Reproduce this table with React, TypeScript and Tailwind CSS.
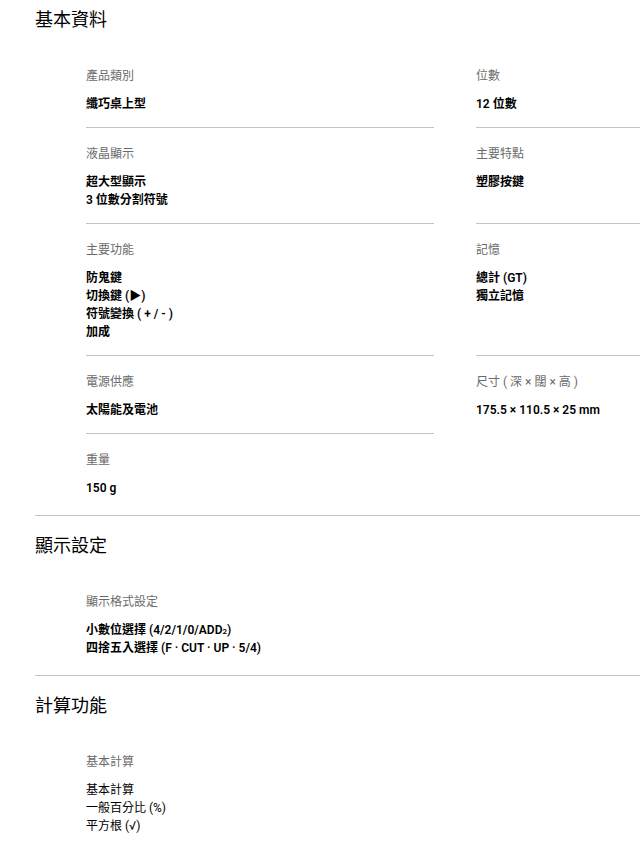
type Spec = {
  label: string;
  values: React.ReactNode[];
};

type Section = {
  title: string;
  items: Spec[];
  plain?: boolean;
};

const sections: Section[] = [
  {
    title: "基本資料",
    items: [
      { label: "產品類別", values: ["纖巧桌上型"] },
      { label: "位數", values: ["12 位數"] },
      { label: "液晶顯示", values: ["超大型顯示", "3 位數分割符號"] },
      { label: "主要特點", values: ["塑膠按鍵"] },
      {
        label: "主要功能",
        values: ["防鬼鍵", "切換鍵 (▶)", "符號變換 ( + / - )", "加成"],
      },
      { label: "記憶", values: ["總計 (GT)", "獨立記憶"] },
      { label: "電源供應", values: ["太陽能及電池"] },
      { label: "尺寸 ( 深 × 闊 × 高 )", values: ["175.5 × 110.5 × 25 mm"] },
      { label: "重量", values: ["150 g"] },
    ],
  },
  {
    title: "顯示設定",
    items: [
      {
        label: "顯示格式設定",
        values: [
          <>
            小數位選擇 (4/2/1/0/ADD
            <span className="text-[8px] leading-[0]">2</span>)
          </>,
          "四捨五入選擇 (F · CUT · UP · 5/4)",
        ],
      },
    ],
  },
  {
    title: "計算功能",
    plain: true,
    items: [
      {
        label: "基本計算",
        values: ["基本計算", "一般百分比 (%)", "平方根 (√)"],
      },
    ],
  },
];

const SpecItem = ({
  spec,
  index,
  plain,
}: {
  spec: Spec;
  index: number;
  plain?: boolean;
}) => (
  <div
    className={
      "pt-[17px] pb-[14px] " + (index >= 2 ? "border-t border-[#c4c4c4]" : "")
    }
  >
    <p className="text-[12px] leading-[18px] text-[#6b6b6b]">{spec.label}</p>
    <div
      className={
        "mt-[10px] text-[12px] leading-[18px] text-black " +
        (plain ? "font-normal" : "font-semibold")
      }
    >
      {spec.values.map((v, i) => (
        <p key={i}>{v}</p>
      ))}
    </div>
  </div>
);

export default function App() {
  return (
    <div
      className="w-[640px] overflow-hidden bg-white"
      style={{ fontFamily: "Roboto, 'Noto Sans CJK TC', sans-serif" }}
    >
      <div className="w-[900px] pl-[35px]">
        {sections.map((section, si) => (
          <section
            key={section.title}
            className={
              (si === 0 ? "pt-[8px]" : "pt-[18px] border-t border-[#c4c4c4]") +
              " pb-[4px]"
            }
          >
            <h2 className="text-[18px] leading-[24px] text-black">
              {section.title}
            </h2>
            <div className="mt-[18px] pl-[51px] grid grid-cols-[348px_348px] gap-x-[42px]">
              {section.items.map((spec, i) => (
                <SpecItem
                  key={spec.label + i}
                  spec={spec}
                  index={i}
                  plain={section.plain}
                />
              ))}
            </div>
          </section>
        ))}
      </div>
    </div>
  );
}
